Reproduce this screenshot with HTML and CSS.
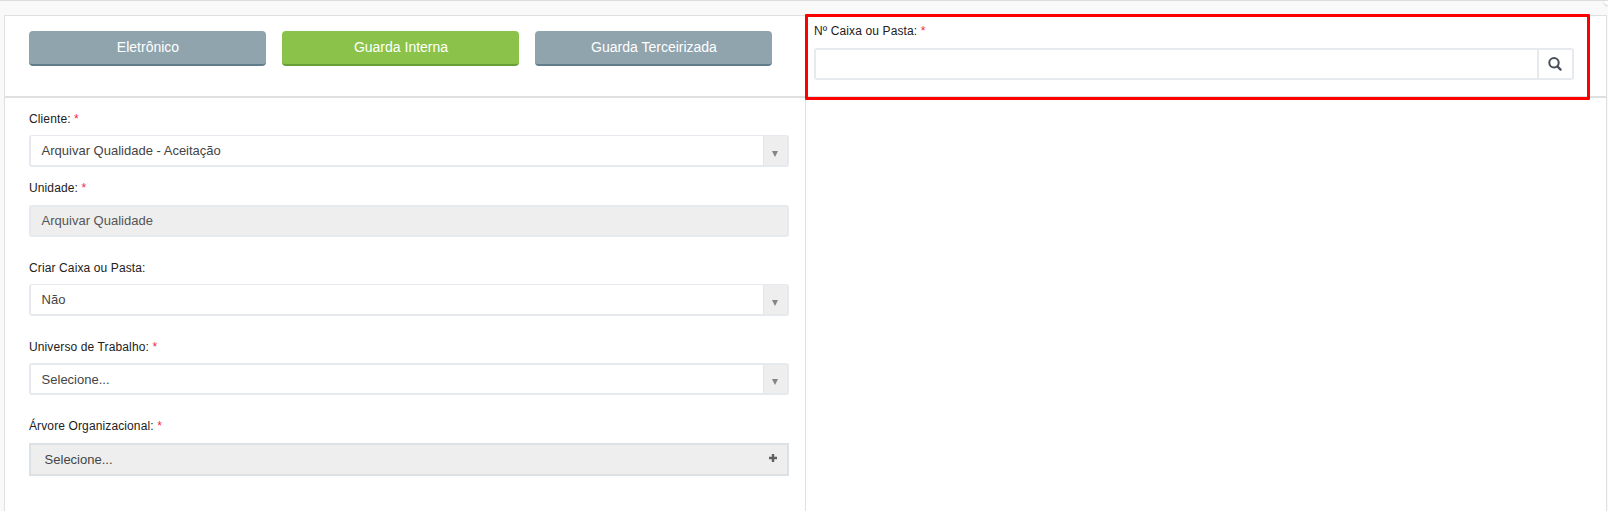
FILE: index.html
```html
<!DOCTYPE html>
<html lang="pt-BR">
<head>
<meta charset="utf-8">
<title>Guarda Interna</title>
<link rel="stylesheet" href="styles.css">
</head>
<body>
<main class="panel">
  <header class="head">
    <nav class="tabs">
      <button class="tab">Eletrônico</button>
      <button class="tab tab-active">Guarda Interna</button>
      <button class="tab">Guarda Terceirizada</button>
    </nav>
    <section class="lookup">
      <label class="label l-box">Nº Caixa ou Pasta: <span class="req">*</span></label>
      <div class="search">
        <div class="search-input"></div>
        <div class="search-btn"><svg width="14" height="14" viewBox="0 0 14 14"><circle cx="6" cy="5.8" r="4.7" fill="none" stroke="#484f59" stroke-width="2"/><path d="M9.4 9.4l3.2 3.2" stroke="#484f59" stroke-width="2.2" stroke-linecap="round"/></svg></div>
      </div>
    </section>
  </header>
  <div class="body">
    <form class="form">
      <div class="field f-client">
        <label class="label">Cliente: <span class="req">*</span></label>
        <div class="control thin"><span class="value">Arquivar Qualidade - Aceitação</span><span class="arrow"><svg width="6" height="6" viewBox="0 0 6 6"><path d="M0 0h6L3 6z" fill="#858585"/></svg></span></div>
      </div>
      <div class="field f-unit">
        <label class="label">Unidade: <span class="req">*</span></label>
        <div class="control disabled"><span class="value">Arquivar Qualidade</span></div>
      </div>
      <div class="field f-create">
        <label class="label">Criar Caixa ou Pasta:</label>
        <div class="control thin"><span class="value">Não</span><span class="arrow"><svg width="6" height="6" viewBox="0 0 6 6"><path d="M0 0h6L3 6z" fill="#858585"/></svg></span></div>
      </div>
      <div class="field f-universe">
        <label class="label">Universo de Trabalho: <span class="req">*</span></label>
        <div class="control"><span class="value">Selecione...</span><span class="arrow"><svg width="6" height="6" viewBox="0 0 6 6"><path d="M0 0h6L3 6z" fill="#858585"/></svg></span></div>
      </div>
      <div class="field f-tree">
        <label class="label">Árvore Organizacional: <span class="req">*</span></label>
        <div class="control tree"><span class="value">Selecione...</span><svg class="plus" width="8" height="8" viewBox="0 0 8 8"><path d="M4 0v8M0 4h8" stroke="#606060" stroke-width="2.4"/></svg></div>
      </div>
    </form>
    <div class="blank"></div>
  </div>
  <div class="highlight"></div>
</main>
<div class="corner"></div>
</body>
</html>
```
FILE: styles.css
```css
* { box-sizing: border-box; }
body {
  margin: 0;
  height: 511px;
  overflow: hidden;
  position: relative;
  padding: 14px 1px 0 4px;
  border-top: 1px solid #ddd;
  background: #f9f9f9;
  font-family: "Liberation Sans", Arial, sans-serif;
  color: #212121;
}
.panel {
  position: relative;
  height: 500px;
  background: #fff;
  border: 1px solid #e0e0e0;
}
.head {
  display: flex;
  height: 82px;
  border-bottom: 2px solid #e0e0e0;
}
.tabs {
  display: flex;
  gap: 16px;
  width: 801px;
  padding: 15px 0 0 24px;
  border-right: 1px solid #e0e0e0;
}
.tab {
  width: 237px;
  height: 35px;
  padding: 0 0 1px 1px;
  border: 0;
  border-bottom: 2px solid #607d8b;
  border-radius: 4px;
  background: #90a4ae;
  color: #fff;
  font: 14px/16px "Liberation Sans", Arial, sans-serif;
}
.tab-active { background: #8bc34a; border-bottom-color: #689f38; }
.lookup { width: 768px; padding: 5px 0 0 8px; }
.label {
  display: block;
  width: max-content;
  height: 20px;
  font-size: 12px;
  line-height: 20px;
  letter-spacing: 0.12px;
  white-space: nowrap;
}
.form .label { line-height: 22px; }
.req { color: #f4264b; }
.search {
  display: flex;
  height: 32px;
  margin-top: 7px;
  border: 2px solid #e6eaee;
  border-radius: 3px;
}
.search-input { flex: 1; }
.search-btn {
  display: flex;
  align-items: center;
  justify-content: center;
  width: 35px;
  padding-right: 2px;
  border-left: 2px solid #e6eaee;
}
.body { display: flex; height: 417px; }
.form {
  width: 801px;
  padding: 10px 16px 0 24px;
  border-right: 1px solid #e0e0e0;
}
.field { display: flex; flex-direction: column; justify-content: space-between; }
.f-client { height: 59px; }
.f-unit { height: 60px; margin-top: 10px; }
.f-create { height: 59px; margin-top: 20px; }
.f-universe { height: 59px; margin-top: 20px; }
.f-tree { height: 61px; margin-top: 20px; }
.control {
  display: flex;
  justify-content: space-between;
  height: 32px;
  border: 2px solid #e6eaee;
  border-radius: 3px;
  padding-left: 10.6px;
}
.thin { border-top-width: 1px; }
.value { font-size: 13px; line-height: 29px; color: #444; white-space: nowrap; }
.thin .value { line-height: 30px; }
.disabled { background: #eee; }
.disabled .value { line-height: 27px; color: #555; }
.arrow {
  display: flex;
  justify-content: center;
  width: 24px;
  padding: 14px 1px 0 0;
  background: #eee;
  border-left: 1px solid #e2e6e9;
}
.thin .arrow { padding-top: 15px; }
.tree {
  height: 33px;
  padding: 0 10px 0 13.6px;
  border-color: #dce1e5;
  border-radius: 0;
  background: #eee;
}
.tree .value { line-height: 29px; }
.plus { margin-top: 9px; }
.highlight {
  position: absolute;
  left: 800px;
  top: -2px;
  width: 785px;
  height: 86px;
  border: 3px solid #f00;
  border-radius: 1px;
}
.corner {
  position: absolute;
  right: 0;
  top: -1px;
  width: 4px;
  height: 5px;
  background: #fff;
  border-bottom-left-radius: 4px;
  box-shadow: 0 1px 2px #ccc;
}
```
